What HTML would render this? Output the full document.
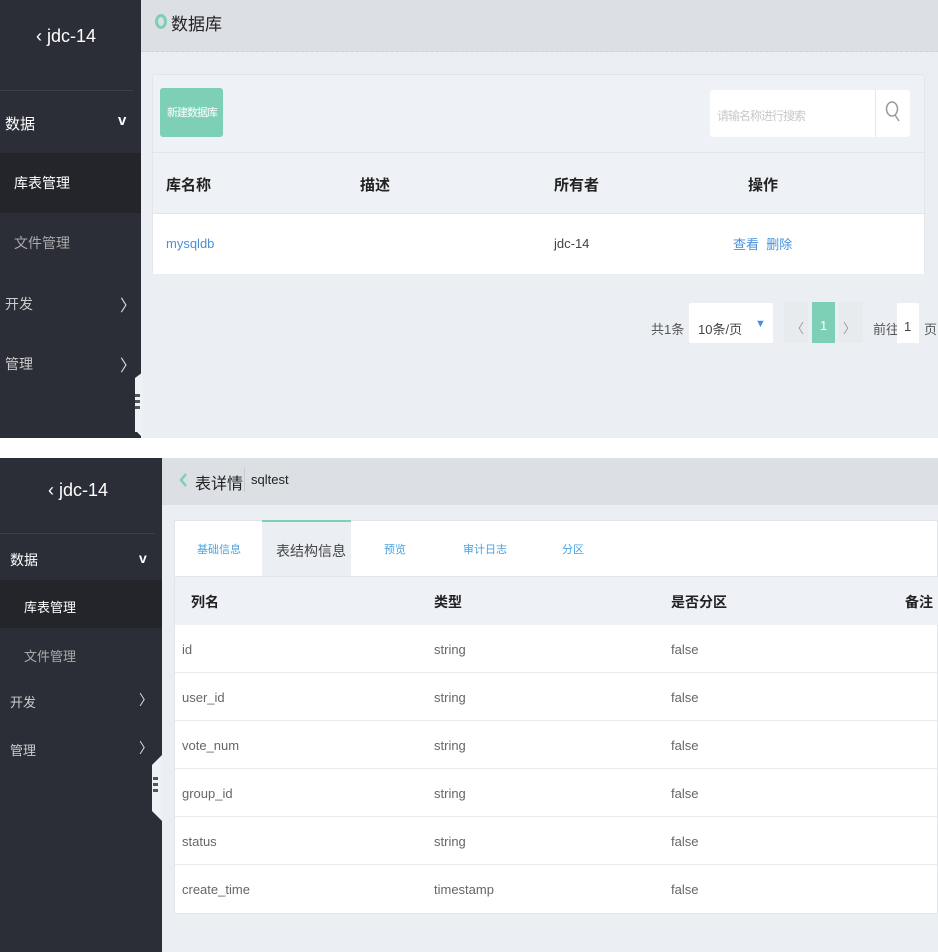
<!DOCTYPE html>
<html><head><meta charset="utf-8"><style>
*{margin:0;padding:0;box-sizing:border-box}
body{width:938px;height:952px;background:#fff;font-family:"Liberation Sans","Noto Sans CJK SC",sans-serif;position:relative;overflow:hidden;font-size:13px}
.a{position:absolute}
.side{background:#2b2e36;color:#fff}
.t{position:absolute;white-space:nowrap}
.hd{font-weight:bold;color:#222;font-size:15px}
.cell{color:#666;font-size:13px}
</style></head><body>
<!-- TOP PANEL -->
<div class="a side" style="left:0;top:0;width:141px;height:438px"></div>
<div class="t" style="left:36px;top:26px;color:#fff;font-size:18px">‹ jdc-14</div>
<div class="a" style="left:0;top:90px;width:133px;height:1px;background:#3b3f48"></div>
<div class="t" style="left:5px;top:113px;color:#fff;font-size:15px">数据</div>
<div class="t" style="left:118px;top:112px;color:#fff;font-size:15px;font-weight:bold">v</div>
<div class="a" style="left:0;top:153px;width:141px;height:60px;background:#23252b"></div>
<div class="t" style="left:14px;top:173px;color:#fff;font-size:14px">库表管理</div>
<div class="t" style="left:14px;top:233px;color:#aaa;font-size:14px">文件管理</div>
<div class="t" style="left:5px;top:294px;color:#ccc;font-size:14px">开发</div>
<div class="t" style="left:120px;top:292px;color:#ddd;font-size:16px">〉</div>
<div class="t" style="left:5px;top:354px;color:#ccc;font-size:14px">管理</div>
<div class="t" style="left:120px;top:352px;color:#ddd;font-size:16px">〉</div>
<div class="a" style="left:141px;top:0;width:797px;height:438px;background:#ebeff3"></div>
<svg class="a" style="left:131px;top:372px" width="12" height="66"><polygon points="12,0 12,66 6,60 4,60 4,6" fill="#eef1f5"/><rect x="4" y="22" width="5" height="3" fill="#555"/><rect x="4" y="28" width="5" height="3" fill="#555"/><rect x="4" y="34" width="5" height="3" fill="#555"/></svg>
<div class="a" style="left:141px;top:0;width:797px;height:52px;background:#dcdfe3;border-bottom:1px dashed #cfd3d8"></div>
<div class="a" style="left:155px;top:14px;width:12px;height:15px;border:3px solid #7dcfb6;border-radius:50%"></div>
<div class="t" style="left:171px;top:10px;font-size:17px;color:#222">数据库</div>
<div class="a" style="left:152px;top:74px;width:773px;height:200px;background:#eef1f5;border:1px solid #e2e6ea;border-radius:3px"></div>
<div class="a" style="left:160px;top:88px;width:63px;height:49px;background:#7dcfb6;border-radius:3px"></div>
<div class="t" style="left:167px;top:104px;color:#fff;font-size:11px;letter-spacing:-1px">新建数据库</div>
<div class="a" style="left:710px;top:90px;width:200px;height:47px;background:#fff;border-radius:3px"></div>
<div class="a" style="left:875px;top:90px;width:1px;height:47px;background:#e4e7ea"></div>
<div class="t" style="left:717px;top:107px;color:#c8c8c8;font-size:12px;letter-spacing:-1px">请输名称进行搜索</div>
<svg class="a" style="left:884px;top:100px" width="18" height="24"><ellipse cx="8" cy="9" rx="5.5" ry="7" fill="none" stroke="#999" stroke-width="1.5"/><line x1="11" y1="15" x2="15" y2="21" stroke="#999" stroke-width="1.5"/></svg>
<div class="a" style="left:153px;top:152px;width:771px;height:1px;background:#e2e6ea"></div>
<div class="t hd" style="left:166px;top:174px">库名称</div>
<div class="t hd" style="left:360px;top:174px">描述</div>
<div class="t hd" style="left:554px;top:174px">所有者</div>
<div class="t hd" style="left:748px;top:174px">操作</div>
<div class="a" style="left:153px;top:213px;width:771px;height:61px;background:#fff;border-top:1px solid #e2e6ea"></div>
<div class="t" style="left:166px;top:236px;color:#4a90d9">mysqldb</div>
<div class="t cell" style="left:554px;top:236px;color:#444">jdc-14</div>
<div class="t" style="left:733px;top:234px;color:#4a90d9">查看 &nbsp;删除</div>
<div class="t" style="left:651px;top:319px;color:#555;font-size:13px">共1条</div>
<div class="a" style="left:689px;top:303px;width:84px;height:40px;background:#fff;border-radius:2px"></div>
<div class="t" style="left:698px;top:319px;color:#444;font-size:13px">10条/页</div>
<div class="t" style="left:755px;top:318px;color:#4a90e2;font-size:11px">▼</div>
<div class="a" style="left:784px;top:302px;width:24px;height:41px;background:#e8ebee"></div>
<div class="t" style="left:791px;top:318px;color:#999">〈</div>
<div class="a" style="left:812px;top:302px;width:23px;height:41px;background:#7dcfb6"></div>
<div class="t" style="left:820px;top:318px;color:#fff">1</div>
<div class="a" style="left:839px;top:302px;width:24px;height:41px;background:#e8ebee"></div>
<div class="t" style="left:843px;top:318px;color:#999">〉</div>
<div class="t" style="left:873px;top:319px;color:#555">前往</div>
<div class="a" style="left:897px;top:303px;width:22px;height:40px;background:#fff"></div>
<div class="t" style="left:904px;top:319px;color:#444">1</div>
<div class="t" style="left:924px;top:319px;color:#555">页</div>

<!-- BOTTOM PANEL -->
<div class="a side" style="left:0;top:458px;width:162px;height:494px"></div>
<div class="t" style="left:48px;top:480px;color:#fff;font-size:18px">‹ jdc-14</div>
<div class="a" style="left:0;top:533px;width:155px;height:1px;background:#3b3f48"></div>
<div class="t" style="left:10px;top:550px;color:#fff;font-size:14px">数据</div>
<div class="t" style="left:139px;top:550px;color:#fff;font-size:14px;font-weight:bold">v</div>
<div class="a" style="left:0;top:580px;width:162px;height:48px;background:#23252b"></div>
<div class="t" style="left:24px;top:597px;color:#fff;font-size:13px">库表管理</div>
<div class="t" style="left:24px;top:646px;color:#aaa;font-size:13px">文件管理</div>
<div class="t" style="left:10px;top:692px;color:#ccc;font-size:13px">开发</div>
<div class="t" style="left:139px;top:690px;color:#ddd;font-size:14px">〉</div>
<div class="t" style="left:10px;top:740px;color:#ccc;font-size:13px">管理</div>
<div class="t" style="left:139px;top:738px;color:#ddd;font-size:14px">〉</div>
<div class="a" style="left:162px;top:458px;width:776px;height:494px;background:#ebeff3"></div>
<svg class="a" style="left:150px;top:755px" width="12" height="66"><polygon points="12,0 12,66 2,56 2,10" fill="#eef1f5"/><rect x="3" y="22" width="5" height="3" fill="#555"/><rect x="3" y="28" width="5" height="3" fill="#555"/><rect x="3" y="34" width="5" height="3" fill="#555"/></svg>
<div class="a" style="left:162px;top:458px;width:776px;height:47px;background:#dcdfe3"></div>
<svg class="a" style="left:178px;top:472px" width="10" height="16"><polyline points="8,2 3,8 8,14" fill="none" stroke="#7dcfb6" stroke-width="2.5"/></svg>
<div class="t" style="left:195px;top:470px;font-size:16px;color:#222">表详情</div>
<div class="a" style="left:244px;top:468px;width:1px;height:24px;background:#c8ccd0"></div>
<div class="t" style="left:251px;top:472px;font-size:13px;color:#222">sqltest</div>
<div class="a" style="left:174px;top:520px;width:764px;height:394px;background:#fff;border:1px solid #e2e6ea"></div>
<div class="a" style="left:262px;top:520px;width:89px;height:56px;background:#ebeff3;border-top:2px solid #7dcfb6"></div>
<div class="t" style="left:197px;top:541px;color:#4aa3e0;font-size:11px">基础信息</div>
<div class="t" style="left:276px;top:541px;color:#444;font-size:14px">表结构信息</div>
<div class="t" style="left:384px;top:541px;color:#4aa3e0;font-size:11px">预览</div>
<div class="t" style="left:463px;top:541px;color:#4aa3e0;font-size:11px">审计日志</div>
<div class="t" style="left:562px;top:541px;color:#4aa3e0;font-size:11px">分区</div>
<div class="a" style="left:175px;top:576px;width:763px;height:49px;background:#eef1f5;border-top:1px solid #e2e6ea"></div>
<div class="t hd" style="left:191px;top:592px;font-size:14px">列名</div>
<div class="t hd" style="left:434px;top:592px;font-size:14px">类型</div>
<div class="t hd" style="left:671px;top:592px;font-size:14px">是否分区</div>
<div class="t hd" style="left:905px;top:592px;font-size:14px">备注</div>
<div class="a" style="left:175px;top:672px;width:763px;height:1px;background:#e8ebee"></div>
<div class="a" style="left:175px;top:720px;width:763px;height:1px;background:#e8ebee"></div>
<div class="a" style="left:175px;top:768px;width:763px;height:1px;background:#e8ebee"></div>
<div class="a" style="left:175px;top:816px;width:763px;height:1px;background:#e8ebee"></div>
<div class="a" style="left:175px;top:864px;width:763px;height:1px;background:#e8ebee"></div>
<div class="t cell" style="left:182px;top:642px">id</div><div class="t cell" style="left:434px;top:642px">string</div><div class="t cell" style="left:671px;top:642px">false</div>
<div class="t cell" style="left:182px;top:690px">user_id</div><div class="t cell" style="left:434px;top:690px">string</div><div class="t cell" style="left:671px;top:690px">false</div>
<div class="t cell" style="left:182px;top:738px">vote_num</div><div class="t cell" style="left:434px;top:738px">string</div><div class="t cell" style="left:671px;top:738px">false</div>
<div class="t cell" style="left:182px;top:786px">group_id</div><div class="t cell" style="left:434px;top:786px">string</div><div class="t cell" style="left:671px;top:786px">false</div>
<div class="t cell" style="left:182px;top:834px">status</div><div class="t cell" style="left:434px;top:834px">string</div><div class="t cell" style="left:671px;top:834px">false</div>
<div class="t cell" style="left:182px;top:882px">create_time</div><div class="t cell" style="left:434px;top:882px">timestamp</div><div class="t cell" style="left:671px;top:882px">false</div>
</body></html>
